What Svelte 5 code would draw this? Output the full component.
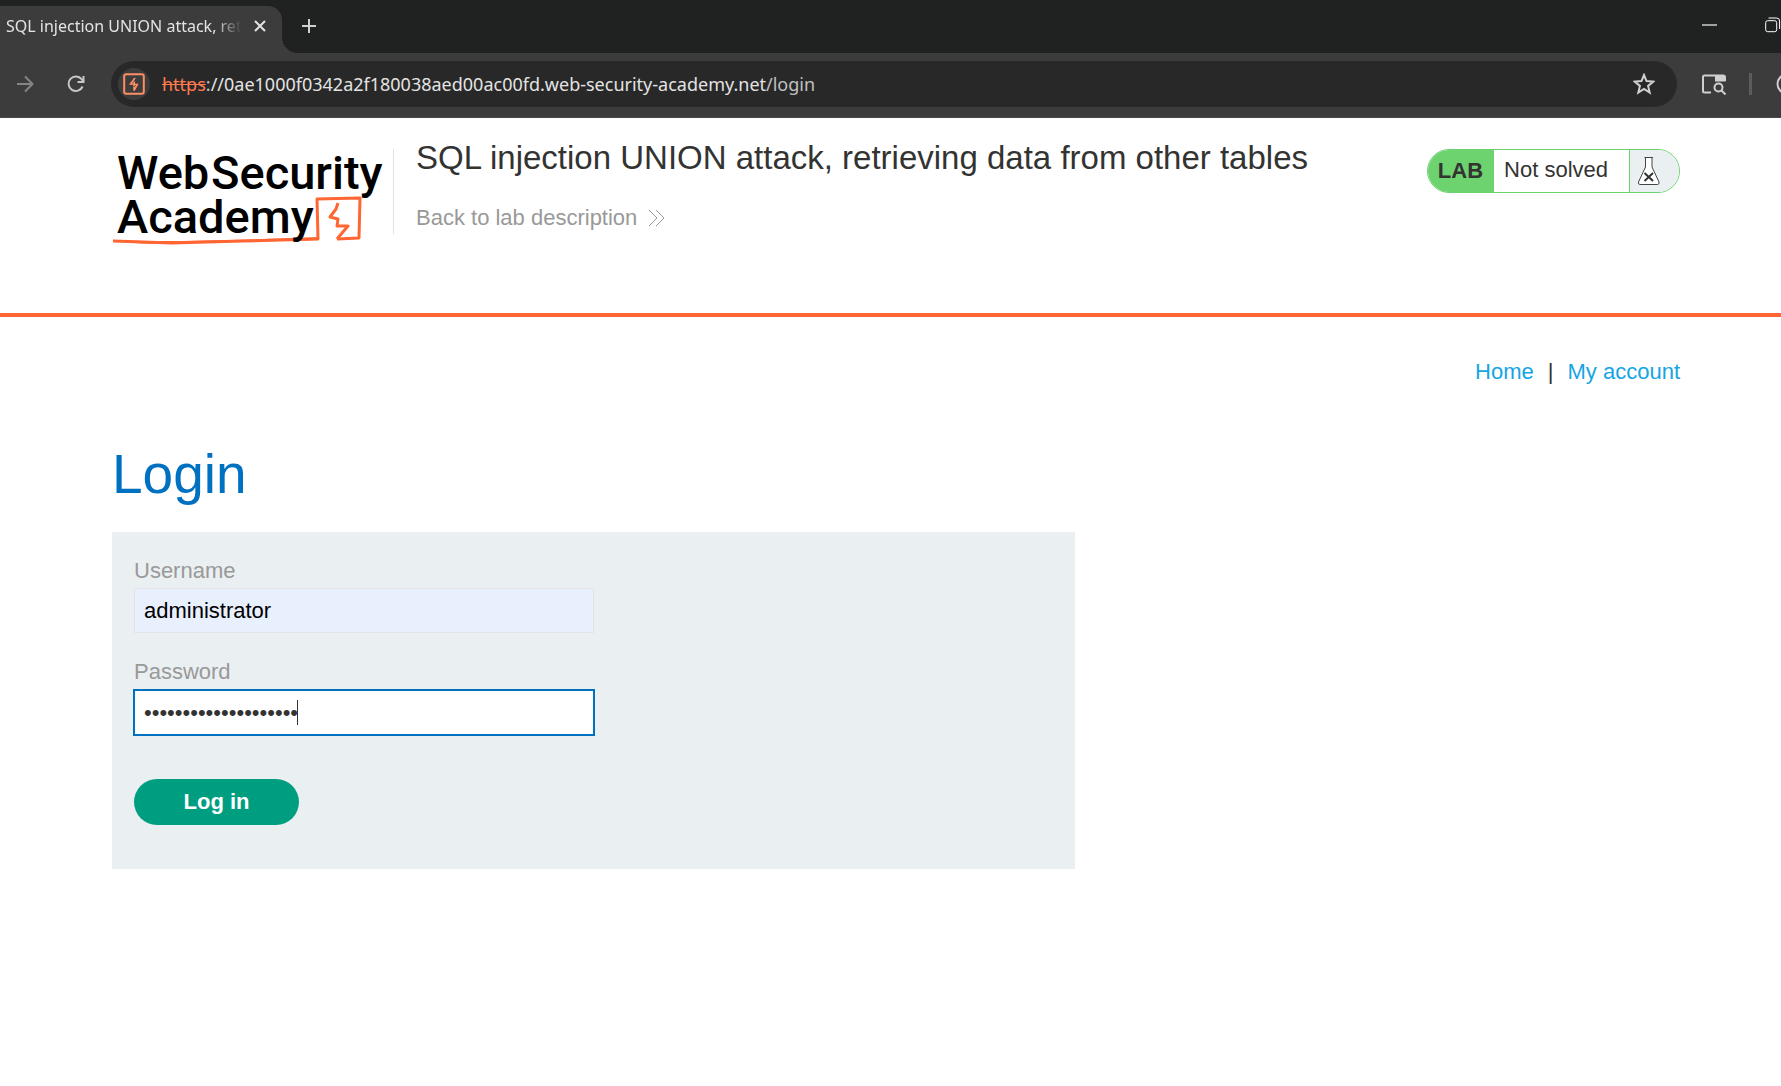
<script>
  let username = $state('administrator');
  let password = $state('abcdefghijklmnopqrst');
</script>

<div class="browser">
  <div class="tabstrip">
    <div class="tab">
      <span class="tab-title">SQL injection UNION attack, ret</span>
      <button class="icon-btn tab-close" aria-label="Close tab">
        <svg width="12" height="12" viewBox="0 0 12 12"><path d="M1 1L11 11M11 1L1 11" /></svg>
      </button>
    </div>
    <div class="tab-curve"></div>
    <button class="icon-btn new-tab" aria-label="New tab">
      <svg width="16" height="16" viewBox="0 0 16 16"><path d="M8 1V15M1 8H15" /></svg>
    </button>
    <div class="window-controls">
      <button class="icon-btn" aria-label="Minimize">
        <svg width="16" height="16" viewBox="0 0 16 16"><path class="minimize" d="M0 8H15" /></svg>
      </button>
      <button class="icon-btn" aria-label="Restore">
        <svg width="16" height="16" viewBox="0 0 16 16" class="thin">
          <rect x="0.7" y="3.7" width="11" height="11" rx="2" />
          <path d="M3.5 1H11.5Q14.6 1 14.6 4V12" />
        </svg>
      </button>
    </div>
  </div>

  <div class="toolbar">
    <button class="icon-btn forward" aria-label="Forward">
      <svg width="18" height="18" viewBox="0 0 18 18"><path d="M1 9H16M9 1.5L16.5 9L9 16.5" /></svg>
    </button>
    <button class="icon-btn reload" aria-label="Reload">
      <svg width="18" height="18" viewBox="0 0 18 18">
        <path d="M15.6 11.5A7.3 7.3 0 1 1 14.6 4.2L16 6" />
        <path d="M16.5 1V7H10.5" />
      </svg>
    </button>
    <div class="address">
      <button class="site-chip" aria-label="Site information">
        <svg width="22" height="22" viewBox="0 0 22 22">
          <rect x="1.2" y="1.2" width="19.6" height="19.6" rx="2" />
          <path class="bolt" d="M12 5L7.5 11H11V13.5M11.3 8.5V11.5H14.3L11 17.5V14" />
        </svg>
      </button>
      <div class="url"><span class="scheme">https</span><span class="dim">:</span>//0ae1000f0342a2f180038aed00ac00fd.web-security-academy.net<span class="dim">/login</span></div>
      <button class="icon-btn" aria-label="Bookmark this page">
        <svg width="22" height="22" viewBox="0 0 22 22">
          <path d="M11 2L13.5 8.1L20.2 8.6L15.1 12.9L16.7 19.5L11 15.9L5.3 19.5L6.9 12.9L1.8 8.6L8.5 8.1Z" />
        </svg>
      </button>
    </div>
    <button class="icon-btn side" aria-label="Search in page">
      <svg width="26" height="22" viewBox="0 0 26 22">
        <path d="M10 19.5H3.5Q2 19.5 2 18V4Q2 2.5 3.5 2.5H22Q24 2.5 24 4.5V8" />
        <path class="solid" d="M14 2H22.5Q24.5 2 24.5 4V8.5H14Z" />
        <circle cx="17.5" cy="14.5" r="4" />
        <path d="M20.5 17.5L24.5 21.5" />
      </svg>
    </button>
    <span class="divider"></span>
    <button class="icon-btn profile" aria-label="Profile">
      <svg width="22" height="22" viewBox="0 0 22 22"><circle cx="11" cy="11" r="9.5" /></svg>
    </button>
  </div>
</div>

<header>
  <a class="logo" href="#academy" aria-label="Web Security Academy">
    <svg width="276" height="100" viewBox="0 0 276 100">
      <path class="stroke" d="M1 92L60 94L130 92L206 90L205 50L248 49L247 89L225 90" />
      <path class="taper" d="M0 91Q60 94 206 88V91Q90 94 50 95Q20 95 0 91Z" />
      <path class="stroke" d="M226 54L224 60L218 68L226 70L225 77L236 77L225 90" />
      <g class="wordmark">
        <text x="5" y="40">Web</text>
        <text x="99" y="40">Security</text>
        <text x="5" y="84">Academy</text>
      </g>
    </svg>
  </a>
  <div class="title-block">
    <h2>SQL injection UNION attack, retrieving data from other tables</h2>
    <a class="back" href="#lab">Back to lab description
      <svg width="17" height="18" viewBox="0 0 17 18"><path d="M1 1L9 9L1 17M8 1L16 9L8 17" /></svg>
    </a>
  </div>
  <div class="status">
    <strong>LAB</strong>
    <span class="state">Not solved</span>
    <span class="flask">
      <svg width="24" height="30" viewBox="0 0 24 30">
        <path class="glass" d="M7.5 1.5H16M8.5 2V11L1.5 26Q1 28.5 3 28.5H20.5Q22.5 28.5 22 26L15 11V2" />
        <path class="cross" d="M7.5 17L16 25M16 17L7.5 25" />
      </svg>
    </span>
  </div>
</header>

<main>
  <nav>
    <a href="#home">Home</a>
    <span>|</span>
    <a href="#account">My account</a>
  </nav>
  <h1>Login</h1>
  <form onsubmit={(e) => e.preventDefault()}>
    <label for="username">Username</label>
    <div class="field"><input id="username" class="filled" type="text" bind:value={username} /></div>
    <label for="password">Password</label>
    <div class="field active">
      <input id="password" type="password" bind:value={password} />
      <span class="caret"></span>
    </div>
    <button class="submit" type="submit">Log in</button>
  </form>
</main>

<style>
  :global(body) {
    background: #fff;
    color: #333332;
    font-family: "Liberation Sans", Arial, sans-serif;
    font-size: 22px;
    line-height: 26px;
    overflow-x: hidden;
  }
  svg {
    display: block;
    flex: none;
    fill: none;
    stroke: currentColor;
    stroke-width: 2;
  }
  button {
    font: inherit;
    border: 0;
    cursor: pointer;
  }
  a { text-decoration: none; }

  .browser {
    overflow: hidden;
    background: #3c3c3c;
    color: #e3e3e3;
    font-family: "Noto Sans", "Open Sans", sans-serif;
    border-bottom: 1px solid #4b4848;
  }
  .icon-btn {
    display: flex;
    flex: none;
    padding: 0;
    background: none;
    color: #d0d0d0;
  }
  .tabstrip {
    display: flex;
    height: 53px;
    background: #202221;
  }
  .tab {
    display: flex;
    align-items: center;
    justify-content: space-between;
    box-sizing: border-box;
    width: 282px;
    margin-top: 6px;
    padding: 0 16px 8px 6px;
    background: #3c3c3c;
    border-top-right-radius: 14px;
  }
  .tab-title {
    white-space: nowrap;
    font-size: 16px;
    line-height: 24px;
    mask-image: linear-gradient(to right, #000 88%, transparent);
  }
  .tab-close { color: #e3e3e3; }
  .tab-curve {
    align-self: flex-end;
    width: 16px;
    height: 16px;
    background: radial-gradient(circle at 100% 0, #202221 16px, #3c3c3c 16px);
  }
  .new-tab {
    padding: 18px 0 0 3px;
    align-self: flex-start;
  }
  .window-controls {
    display: flex;
    align-self: flex-start;
    gap: 47px;
    margin-left: auto;
    padding: 17px 0 0;
  }
  .minimize { stroke: #a0a0a0; }
  .thin { stroke-width: 1; stroke: #fff; }

  .toolbar {
    display: flex;
    align-items: center;
    height: 46px;
    padding: 8px 0 10px 16px;
  }
  .forward { color: #858585; margin-right: 33px; }
  .reload { margin-right: 26px; color: #c7c7c7; }
  .address {
    display: flex;
    flex: 1;
    align-items: center;
    min-width: 0;
    box-sizing: border-box;
    height: 46px;
    padding: 0 22px 0 7px;
    border-radius: 23px;
    background: #282828;
  }
  .site-chip {
    display: flex;
    flex: none;
    align-items: center;
    justify-content: center;
    box-sizing: border-box;
    width: 32px;
    height: 32px;
    padding: 0;
    border-radius: 50%;
    background: #3c3c3c;
    color: #ff8d64;
  }
  .bolt { stroke-width: 1.6; }
  .url {
    flex: 1;
    overflow: hidden;
    padding-left: 12px;
    white-space: nowrap;
    font-size: 18px;
    line-height: 26px;
  }
  .dim { color: #c0c0c0; }
  .scheme {
    color: #ff7a50;
    text-decoration: line-through;
  }
  .side { margin-left: 24px; }
  .solid { fill: currentColor; stroke: none; }
  .divider {
    width: 3px;
    height: 22px;
    margin: 0 24px 0 22px;
    background: #5c5c5c;
  }
  .profile { width: 5px; }

  header {
    display: flex;
    align-items: flex-start;
    box-sizing: border-box;
    min-height: 199px;
    padding: 0 101px 0 112px;
    border-bottom: 4px solid #ff6633;
  }
  .logo {
    flex: none;
    margin-top: 31px;
    padding-right: 5px;
    height: 85px;
    border-right: 1px solid #e2e2e2;
  }
  .logo svg { overflow: visible; }
  .stroke {
    stroke: #ff6633;
    stroke-width: 3;
    stroke-linejoin: round;
  }
  .taper { fill: #ff6633; stroke: none; }
  .wordmark {
    fill: #000;
    stroke: none;
    font-family: Roboto, sans-serif;
    font-size: 47px;
    font-weight: 500;
  }
  .title-block {
    flex: 1;
    margin-left: 22px;
  }
  h2 {
    margin: 20px 0 27px;
    font-size: 33px;
    font-weight: 400;
    line-height: 40px;
  }
  .back {
    display: flex;
    align-items: center;
    gap: 11px;
    color: #999;
  }
  .back svg { stroke-width: 1; }
  .status {
    display: flex;
    flex: none;
    box-sizing: border-box;
    height: 44px;
    margin-top: 31px;
    overflow: hidden;
    border: 1px solid #6dd36f;
    border-radius: 22px;
    line-height: 40px;
  }
  .status strong {
    padding: 1px 11px 0 10px;
    background: #6dd36f;
  }
  .state { padding: 0 21px 0 10px; }
  .flask {
    display: flex;
    align-items: center;
    padding: 0 18px 0 7px;
    border-left: 1px solid #6dd36f;
    background: #eaeff2;
  }
  .glass { fill: #fff; stroke: #444; stroke-width: 1; }
  .cross { stroke: #333; stroke-width: 2; }

  main { padding: 42px 101px 40px 112px; }
  nav {
    display: flex;
    justify-content: flex-end;
    gap: 14px;
  }
  nav a { color: #16a5e3; }
  h1 {
    margin: 57px 0 26px;
    color: #0070c0;
    font-size: 55px;
    font-weight: 400;
    line-height: 64px;
  }
  form {
    box-sizing: border-box;
    max-width: 963px;
    padding: 26px 22px 44px;
    background: #eaeff2;
  }
  label {
    display: block;
    color: #999;
  }
  .field {
    position: relative;
    max-width: 460px;
    margin: 4px 0 26px;
  }
  input {
    display: block;
    box-sizing: border-box;
    width: 100%;
    height: 45px;
    padding: 0 9px;
    border: 1px solid #e4e4e4;
    border-radius: 0;
    background: #fff;
    color: #333332;
    font: inherit;
    outline: none;
  }
  .filled { background: #e8f0fe; color: #000; }
  .active { margin: 5px 0 44px; }
  .active input {
    border-color: #0070c0;
    box-shadow: 0 0 0 1px #0070c0;
  }
  .caret {
    position: absolute;
    left: 163px;
    top: 10px;
    width: 1px;
    height: 25px;
    background: #333;
  }
  .submit {
    display: block;
    width: 165px;
    height: 46px;
    padding: 0;
    border-radius: 23px;
    background: #009e81;
    color: #fff;
    font-weight: 700;
  }
</style>
